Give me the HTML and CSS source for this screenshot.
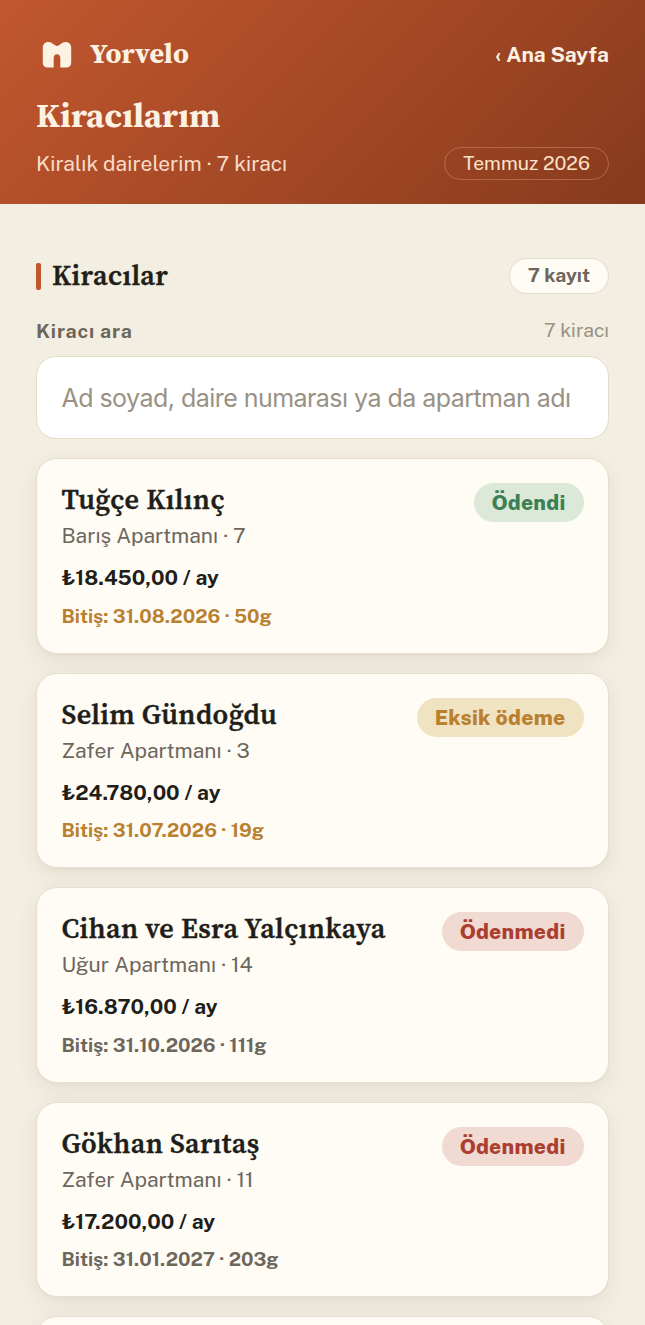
FILE: index.html
```html
<!DOCTYPE html>
<html lang="tr">
<head>
<meta charset="utf-8">
<title>Kiracılarım – Yorvelo</title>
<link rel="stylesheet" href="styles.css">
</head>
<body>
<header class="hero">
  <div class="hero-top">
    <div class="brand">
      <svg class="logo" viewBox="0 0 30 28" aria-hidden="true"><path d="M0.8 7C0.8 3.2 3 1 6.3 1C8.5 1 9.8 1.9 11.3 3.1C12.7 4.2 13.7 4.9 15 4.9C16.3 4.9 17.3 4.2 18.7 3.1C20.2 1.9 21.5 1 23.7 1C27 1 29.2 3.2 29.2 7V21.6C29.2 24.8 27.4 26.6 24.2 26.6H18.3V17C18.3 14.5 17 13.2 15 13.2C13 13.2 11.7 14.5 11.7 17V26.6H5.8C2.6 26.6 0.8 24.8 0.8 21.6Z"/></svg>
      <span class="brand-name">Yorvelo</span>
    </div>
    <a class="back">‹ Ana Sayfa</a>
  </div>
  <h1 class="title">Kiracılarım</h1>
  <div class="hero-bottom">
    <span class="subtitle">Kiralık dairelerim · 7 kiracı</span>
    <span class="month">Temmuz 2026</span>
  </div>
</header>
<main class="content">
  <div class="section-head">
    <h2 class="section-title">Kiracılar</h2>
    <span class="count">7 kayıt</span>
  </div>
  <div class="search-head">
    <span class="search-label">Kiracı ara</span>
    <span class="search-count">7 kiracı</span>
  </div>
  <div class="search">Ad soyad, daire numarası ya da apartman adı</div>
  <section class="list">
    <article class="card">
      <div class="info">
        <h3 class="name">Tuğçe Kılınç</h3>
        <p class="place">Barış Apartmanı · 7</p>
        <p class="rent">₺18.450,00 / ay</p>
        <p class="end soon">Bitiş: 31.08.2026 · 50g</p>
      </div>
      <span class="badge paid">Ödendi</span>
    </article>
    <article class="card">
      <div class="info">
        <h3 class="name">Selim Gündoğdu</h3>
        <p class="place">Zafer Apartmanı · 3</p>
        <p class="rent">₺24.780,00 / ay</p>
        <p class="end soon">Bitiş: 31.07.2026 · 19g</p>
      </div>
      <span class="badge partial">Eksik ödeme</span>
    </article>
    <article class="card">
      <div class="info">
        <h3 class="name">Cihan ve Esra Yalçınkaya</h3>
        <p class="place">Uğur Apartmanı · 14</p>
        <p class="rent">₺16.870,00 / ay</p>
        <p class="end">Bitiş: 31.10.2026 · 111g</p>
      </div>
      <span class="badge unpaid">Ödenmedi</span>
    </article>
    <article class="card">
      <div class="info">
        <h3 class="name">Gökhan Sarıtaş</h3>
        <p class="place">Zafer Apartmanı · 11</p>
        <p class="rent">₺17.200,00 / ay</p>
        <p class="end">Bitiş: 31.01.2027 · 203g</p>
      </div>
      <span class="badge unpaid">Ödenmedi</span>
    </article>
    <article class="card peek"></article>
  </section>
</main>
</body>
</html>
```
FILE: styles.css
```css
* { box-sizing: border-box; }
body {
  display: flow-root;
  margin: 0;
  height: 1325px;
  overflow: hidden;
  background: #f3eee2;
  color: #211e19;
  font-family: "Public Sans", Inter, "Liberation Sans", sans-serif;
  white-space: nowrap;
}
h1, h2, h3, p { margin: 0; }
.hero {
  height: 204px;
  padding: 36px 36px 0;
  background: linear-gradient(135deg, #c1572f 0%, #9f4624 60%, #873a1d 100%);
  color: #fdf1e2;
}
.hero-top, .hero-bottom, .section-head, .search-head {
  display: flex;
  align-items: center;
  justify-content: space-between;
}
.hero-top { height: 36px; }
.brand { display: flex; align-items: center; gap: 18px; padding-left: 6px; }
.logo { display: block; width: 30px; height: 28px; margin-top: 2px; fill: #fdf1e2; }
.brand-name, .title, .section-title, .name {
  font-family: "Source Serif 4", "Liberation Serif", serif;
  font-weight: 700;
}
.brand-name { font-size: 28.2px; line-height: 34px; margin-top: -2px; letter-spacing: 0.15px; }
.back { font-size: 21px; font-weight: 700; }
.title {
  margin-top: 23px;
  font-size: 34.5px;
  line-height: 40px;
}
.hero-bottom { margin-top: 12px; height: 33px; }
.subtitle { font-size: 21px; color: #f9dcc8; }
.month {
  height: 33px;
  padding: 0 18px;
  border: 1.5px solid rgba(255, 214, 180, 0.28);
  border-radius: 17px;
  font-size: 19.4px;
  line-height: 30px;
  color: #fbe3cb;
}
.content { padding: 54px 36px 0; }
.section-head { height: 36px; }
.section-title {
  display: flex;
  align-items: center;
  gap: 11px;
  margin-top: -2px;
  font-size: 28.2px;
  font-weight: 600;
  letter-spacing: 0.38px;
  -webkit-text-stroke: 0.4px currentColor;
}
.section-title::before {
  content: "";
  width: 5px;
  height: 27px;
  margin-top: 2px;
  border-radius: 2px;
  background: #c1572f;
}
.count {
  height: 36px;
  padding: 0 18px;
  border: 1.5px solid #e4dcc8;
  border-radius: 18px;
  background: #fffcf6;
  font-size: 19.4px;
  font-weight: 700;
  line-height: 32px;
  color: #6d665b;
}
.search-head { margin-top: 23px; height: 26px; }
.search-label { font-size: 19.6px; font-weight: 700; letter-spacing: 0.8px; color: #6d665b; }
.search-count { font-size: 19.4px; color: #999184; }
.search {
  height: 83px;
  margin-top: 13px;
  padding-left: 24.5px;
  border: 1.5px solid #e4dcc8;
  border-radius: 20px;
  background: #fff;
  font-family: Inter, sans-serif;
  font-size: 25px;
  line-height: 82px;
  letter-spacing: -0.54px;
  color: #999184;
}
.list { display: grid; gap: 19px; margin-top: 19px; }
.card {
  display: flex;
  align-items: flex-start;
  justify-content: space-between;
  height: 195.5px;
  padding: 24px 24.5px 0 24.5px;
  border: 1.5px solid #e6dfcd;
  border-radius: 21px;
  background: #fffcf6;
  box-shadow: 0 2px 3px rgba(70, 60, 20, 0.03), 0 7px 22px rgba(70, 60, 20, 0.08);
}
.peek { height: 9px; border-bottom: 0; border-radius: 21px 21px 0 0; }
.name {
  margin-top: -1px;
  font-size: 28.2px;
  font-weight: 600;
  line-height: 34px;
  letter-spacing: 0.36px;
  -webkit-text-stroke: 0.35px currentColor;
}
.place { margin-top: 4px; font-size: 21px; line-height: 32px; color: #6d665b; }
.rent { margin-top: 11px; font-size: 21px; font-weight: 700; line-height: 30px; }
.end { margin-top: 8.5px; font-size: 19.4px; font-weight: 700; line-height: 28px; color: #6d665b; }
.soon { color: #b9802f; }
.badge {
  height: 39px;
  padding: 0 18px;
  border-radius: 20px;
  font-size: 21px;
  font-weight: 800;
  line-height: 39px;
  letter-spacing: 0.28px;
}
.paid { background: #dce9d8; color: #3c8056; }
.partial { background: #f0e3c2; color: #b9802f; }
.unpaid { background: #f0dad1; color: #ab3e30; }
```
